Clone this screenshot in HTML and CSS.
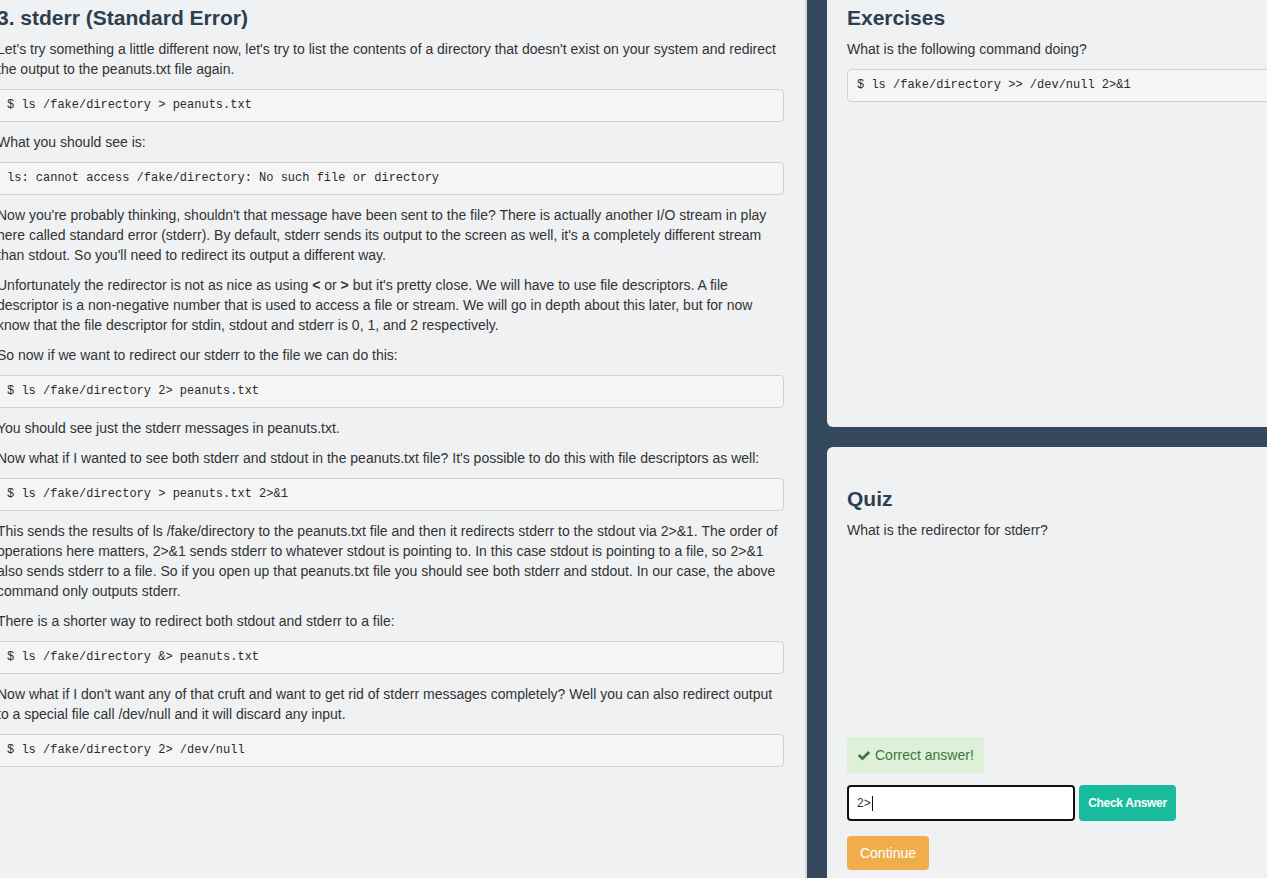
FILE: index.html
```html
<!DOCTYPE html>
<html lang="en">
<head>
<meta charset="utf-8">
<title>stderr (Standard Error)</title>
<link rel="stylesheet" href="styles.css">
</head>
<body>
<div class="layout">
  <main class="lesson">
    <div class="lesson-inner">
      <h2 class="title">3. stderr (Standard Error)</h2>
      <p>Let's try something a little different now, let's try to list the contents of a directory that doesn't exist on your system and redirect the output to the peanuts.txt file again.</p>
      <pre class="code">$ ls /fake/directory &gt; peanuts.txt</pre>
      <p>What you should see is:</p>
      <pre class="code">ls: cannot access /fake/directory: No such file or directory</pre>
      <p>Now you're probably thinking, shouldn't that message have been sent to the file? There is actually another I/O stream in play here called standard error (stderr). By default, stderr sends its output to the screen as well, it's a completely different stream than stdout. So you'll need to redirect its output a different way.</p>
      <p>Unfortunately the redirector is not as nice as using <b>&lt;</b> or <b>&gt;</b> but it's pretty close. We will have to use file descriptors. A file descriptor is a non-negative number that is used to access a file or stream. We will go in depth about this later, but for now know that the file descriptor for stdin, stdout and stderr is 0, 1, and 2 respectively.</p>
      <p>So now if we want to redirect our stderr to the file we can do this:</p>
      <pre class="code">$ ls /fake/directory 2&gt; peanuts.txt</pre>
      <p>You should see just the stderr messages in peanuts.txt.</p>
      <p>Now what if I wanted to see both stderr and stdout in the peanuts.txt file? It's possible to do this with file descriptors as well:</p>
      <pre class="code">$ ls /fake/directory &gt; peanuts.txt 2&gt;&amp;1</pre>
      <p>This sends the results of ls /fake/directory to the peanuts.txt file and then it redirects stderr to the stdout via 2&gt;&amp;1. The order of operations here matters, 2&gt;&amp;1 sends stderr to whatever stdout is pointing to. In this case stdout is pointing to a file, so 2&gt;&amp;1 also sends stderr to a file. So if you open up that peanuts.txt file you should see both stderr and stdout. In our case, the above command only outputs stderr.</p>
      <p>There is a shorter way to redirect both stdout and stderr to a file:</p>
      <pre class="code">$ ls /fake/directory &amp;&gt; peanuts.txt</pre>
      <p>Now what if I don't want any of that cruft and want to get rid of stderr messages completely? Well you can also redirect output to a special file call /dev/null and it will discard any input.</p>
      <pre class="code">$ ls /fake/directory 2&gt; /dev/null</pre>
    </div>
  </main>
  <aside class="side">
    <section class="card exercises">
      <h2 class="title">Exercises</h2>
      <p>What is the following command doing?</p>
      <pre class="code">$ ls /fake/directory &gt;&gt; /dev/null 2&gt;&amp;1</pre>
    </section>
    <section class="card quiz">
      <h2 class="title">Quiz</h2>
      <p>What is the redirector for stderr?</p>
      <div class="alert">
        <svg class="check" viewBox="0 0 16 14" width="14" height="13" aria-hidden="true"><path d="M1 7.6 L3.2 5.4 L6.2 8.4 L12.8 1.8 L15 4 L6.2 12.8 Z" fill="#3c763d"/></svg>
        <span>Correct answer!</span>
      </div>
      <div class="answer-row">
        <div class="answer-input">2&gt;<span class="caret"></span></div>
        <button class="btn btn-check">Check Answer</button>
      </div>
      <button class="btn btn-continue">Continue</button>
    </section>
  </aside>
</div>
</body>
</html>
```

FILE: styles.css
```css
html, body {
  margin: 0;
  padding: 0;
  height: 100%;
  overflow: hidden;
}
body {
  background: #34495e;
  font-family: "Liberation Sans", Arial, sans-serif;
  font-size: 14px;
  line-height: 20px;
  color: #333333;
}
.layout {
  display: flex;
  height: 878px;
}
.lesson {
  flex: 0 0 805px;
  background: #f0f1f2;
  border-right: 2px solid #d3d7db;
  overflow: hidden;
}
.lesson-inner {
  margin-left: -3px;
  padding: 6px 21px 0 0;
}
.title {
  margin: 0 0 10px 0;
  font-size: 21px;
  line-height: 23px;
  font-weight: bold;
  color: #2c3e50;
}
p {
  margin: 0 0 10px 0;
}
.code {
  margin: 0 0 10px 0;
  padding: 8px 9px;
  font-family: "Liberation Mono", "DejaVu Sans Mono", monospace;
  font-size: 12px;
  line-height: 15px;
  color: #2a2a2a;
  background: #f5f5f5;
  border: 1px solid #d0d0d0;
  border-radius: 4px;
  white-space: pre;
}
.side {
  flex: 0 0 auto;
  width: 620px;
  padding-left: 20px;
  display: flex;
  flex-direction: column;
  gap: 20px;
}
.card {
  background: #f0f1f2;
  border-radius: 6px;
  padding: 6px 20px 0 20px;
}
.exercises {
  flex: 0 0 auto;
  box-sizing: border-box;
  height: 427px;
  border-top-left-radius: 0;
}
.quiz {
  flex: 0 0 auto;
  box-sizing: border-box;
  height: 520px;
  padding-top: 40px;
}
.quiz p {
  margin-bottom: 197px;
}
.alert {
  display: inline-flex;
  align-items: center;
  gap: 4px;
  padding: 8px 10px;
  background: #dff0d8;
  color: #3c763d;
  font-size: 14px;
  line-height: 20px;
  margin-bottom: 12px;
}
.alert .check {
  display: block;
}
.answer-row {
  display: flex;
  gap: 4px;
  margin-bottom: 15px;
}
.answer-input {
  box-sizing: border-box;
  width: 228px;
  height: 36px;
  border: 2px solid #111111;
  border-radius: 4px;
  background: #ffffff;
  padding: 0 8px;
  font-size: 12px;
  line-height: 32px;
  color: #333333;
  display: flex;
  align-items: center;
}
.caret {
  display: inline-block;
  width: 1px;
  height: 15px;
  background: #111111;
  margin-left: 1px;
}
.btn {
  font-family: "Liberation Sans", Arial, sans-serif;
  border: none;
  border-radius: 4px;
  color: #ffffff;
  cursor: pointer;
}
.btn-check {
  width: 97px;
  height: 36px;
  background: #18bc9c;
  font-size: 12px;
  font-weight: bold;
  letter-spacing: -0.3px;
  padding: 0;
}
.btn-continue {
  display: block;
  width: 82px;
  height: 34px;
  background: #f0ad4e;
  font-size: 14px;
  padding: 0;
}
```
